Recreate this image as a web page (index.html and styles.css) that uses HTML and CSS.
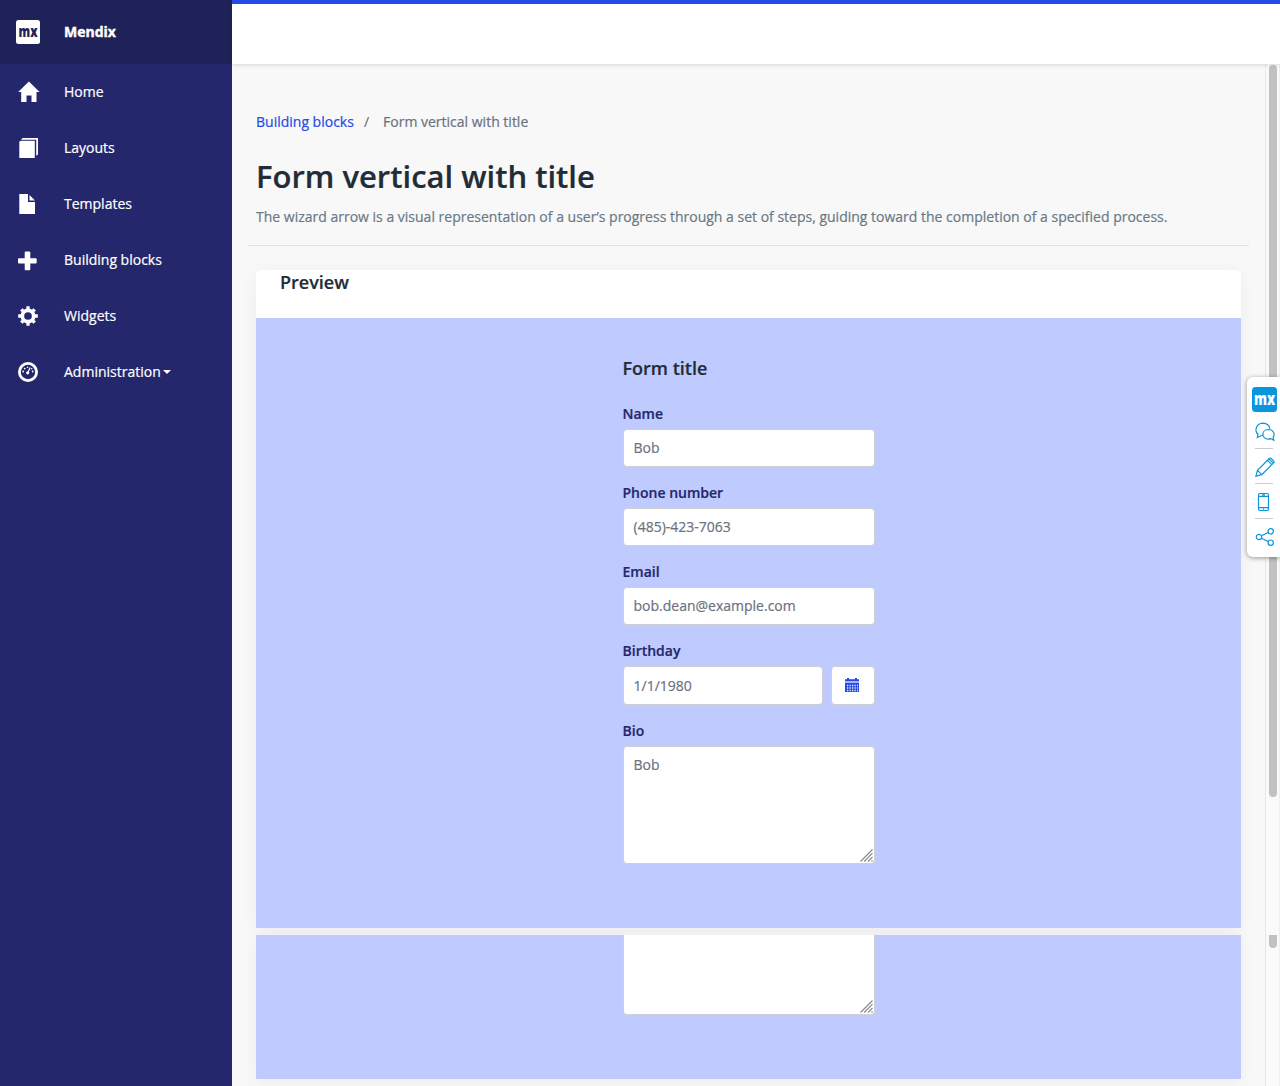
FILE: index.html
```html
<!DOCTYPE html>
<html lang="en">
<head>
<meta charset="utf-8">
<title>Form vertical with title</title>
<link rel="stylesheet" href="styles.css">
</head>
<body>
<div class="app">
  <nav class="sidebar">
    <div class="brand">
      <svg class="nav-icon" viewBox="0 0 24 24"><rect width="24" height="24" rx="2.5" fill="#fff"/><text class="brand-mark" x="12" y="16.6" textLength="19" lengthAdjust="spacingAndGlyphs">mx</text></svg>
      <span>Mendix</span>
    </div>
    <a class="nav-item"><svg class="nav-icon" viewBox="0 0 24 24"><path d="M12.9 1.400 23.600 12H20.500v10h-5v-6.500h-5V22H5.200V12H2.200z"/></svg><span>Home</span></a>
    <a class="nav-item"><svg class="nav-icon" viewBox="0 0 24 24"><path d="M3.300 5.500 5 4.800H18.800V22H3.300z"/><path d="M5 3.800 6.500 2H22v16.500l-1.800 1.300V3.800z"/></svg><span>Layouts</span></a>
    <a class="nav-item"><svg class="nav-icon" viewBox="0 0 24 24"><path d="M3.300 2h8.700v8h7v12H3.300zM13.500 3v5.500H19z"/></svg><span>Templates</span></a>
    <a class="nav-item"><svg class="nav-icon" viewBox="0 0 24 24"><path d="M9.700 3.500h3.600q1 0 1 1v5.800h5.400q1 0 1 1v3.200q0 1-1 1h-5.400v5.700q0 1-1 1H9.700q-1 0-1-1v-5.700H3q-1 0-1-1v-3.200q0-1 1-1h5.700V4.500q0-1 1-1z"/></svg><span>Building blocks</span></a>
    <a class="nav-item"><svg class="nav-icon" viewBox="0 0 24 24"><circle class="gear-ring" cx="12" cy="12" r="5.700"/><path class="gear-teeth" d="M12 2.200v3M12 18.800v3M2.200 12h3M18.800 12h3M5.300 5.300 7 7M17 17l1.700 1.700M5.300 18.700 7 17M17 7l1.700-1.700"/></svg><span>Widgets</span></a>
    <a class="nav-item"><svg class="nav-icon" viewBox="0 0 24 24"><circle class="dial" cx="12" cy="12" r="8.600"/><path class="dial-hand" d="M11.700 12.800 14.200 7.500"/><circle cx="11.700" cy="12.800" r="1.600"/><circle cx="7.200" cy="11.500" r=".9"/><circle cx="8.700" cy="8.600" r=".9"/><circle cx="11.500" cy="7.300" r=".8"/><circle cx="16.700" cy="11.500" r=".9"/><circle cx="15.700" cy="8.700" r=".8"/></svg><span>Administration</span><i class="caret"></i></a>
  </nav>
  <div class="main">
    <header class="topbar"></header>
    <div class="body">
      <div class="content">
        <div class="page-head">
          <div class="breadcrumb"><a>Building blocks</a><span class="slash">/</span><span>Form vertical with title</span></div>
          <h1>Form vertical with title</h1>
          <p>The wizard arrow is a visual representation of a user’s progress through a set of steps, guiding toward the completion of a specified process.</p>
        </div>
        <section class="card">
          <h2 class="card-title">Preview</h2>
          <div class="preview">
            <form class="form">
              <h3>Form title</h3>
              <div class="group"><label>Name</label><div class="input">Bob</div></div>
              <div class="group"><label>Phone number</label><div class="input">(485)-423-7063</div></div>
              <div class="group"><label>Email</label><div class="input">bob.dean@example.com</div></div>
              <div class="group"><label>Birthday</label>
                <div class="date-row"><div class="input date">1/1/1980</div><div class="date-button"><svg width="14" height="14" viewBox="0 0 14 14"><path d="M0 1.200h2V0h2v1.200h6V0h2v1.200h2V3H0z"/><path class="band" d="M0 3h14v2H0z"/><path d="M0 5h14v9H0z"/><path class="grid" d="M2 7.500h11M2 10h11M2 12.500h11"/></svg></div></div>
              </div>
              <div class="group"><label>Bio</label><div class="input area">Bob<svg class="grip" viewBox="0 0 13 13"><path d="M.5 12.500l12-12M4.200 12.500l8.300-8.300M8 12.500l4.500-4.500M11.500 12.500l1-1"/></svg></div></div>
            </form>
          </div>
        </section>
        <section class="card continued">
          <div class="preview-end">
            <div class="area-end"><svg class="grip" viewBox="0 0 13 13"><path d="M.5 12.500l12-12M4.200 12.500l8.300-8.300M8 12.500l4.500-4.500M11.500 12.500l1-1"/></svg></div>
          </div>
        </section>
      </div>
      <div class="rail"><div class="thumb"></div><div class="thumb-end"></div></div>
    </div>
  </div>
  <aside class="toolbox">
    <svg class="logo" viewBox="0 0 25 25"><rect width="25" height="25" rx="3.500"/><text transform="translate(2 17.800) scale(.72 1)">mx</text></svg>
    <div class="tool"><svg viewBox="0 0 20 20"><path d="M8 13.200 6 13.800 2.300 15.500 3 12.300C-.5 9.500.5 1.500 7.800 1.200c4.500 0 7 2.800 7 5.600"/><path d="M13.300 7.500c-7.300.2-7.200 9.500 0 9.600.9 0 1.700-.2 2.500-.5l3 1.700-.7-3.200c2.400-3 .2-7.600-4.800-7.600z"/></svg></div>
    <div class="tool"><svg viewBox="0 0 20 20"><path d="M.9 19.200 2.500 13.300 14.300 1.500q1-1 2 0l2.300 2.300q1 1 0 2L6.800 17.600zM2.500 13.300l4.300 4.300M12.500 3.300l4.300 4.300M14 1.900l4.300 4.300"/></svg></div>
    <div class="tool"><svg viewBox="0 0 20 20"><rect x="3.500" y="1.500" width="10" height="17" rx="1.500"/><path d="M3.500 4.300h10M3.500 15.700h10M7 2.900h3M8 17.200h1"/></svg></div>
    <div class="tool"><svg viewBox="0 0 20 20"><circle cx="4" cy="10" r="2.700"/><circle cx="15.700" cy="4.300" r="2.700"/><circle cx="15.700" cy="15.700" r="2.700"/><path d="m6.500 8.800 6.700-3.300M6.500 11.200l6.700 3.300"/></svg></div>
  </aside>
</div>
</body>
</html>
```
FILE: styles.css
```css
* { box-sizing: border-box; }
body { margin: 0; font: 14px/20px "Open Sans", sans-serif; color: #6c7180; background: #f8f8f8; -webkit-text-stroke: .2px; }
h1, h2, h3, p { margin: 0; }
.app { position: relative; display: flex; height: 1086px; overflow: hidden; }

.sidebar { width: 232px; flex: none; background: #24276c; color: #fff; }
.brand, .nav-item { display: flex; align-items: center; height: 56px; padding-left: 16px; }
.brand { height: 64px; background: #1f2159; font-weight: 700; -webkit-text-stroke: .4px; }
.nav-icon { width: 24px; height: 24px; margin-right: 24px; fill: #fff; overflow: visible; }
.brand-mark { font: 800 16px "Open Sans", sans-serif; fill: #1f2159; text-anchor: middle; -webkit-text-stroke: 0; }
.gear-ring { fill: none; stroke: #fff; stroke-width: 3.7; }
.gear-teeth { stroke: #fff; stroke-width: 3.3; }
.dial { fill: none; stroke: #fff; stroke-width: 2.8; }
.dial-hand { stroke: #fff; stroke-width: 1.2; }
.caret { margin-left: 2px; border: 4px solid transparent; border-top-color: #fff; border-bottom: 0; }

.main { flex: 1; min-width: 0; display: flex; flex-direction: column; }
.topbar { position: relative; z-index: 1; height: 64px; flex: none; border-top: 4px solid #264ae5; background: #fff; box-shadow: 0 1px 4px rgba(0, 0, 0, .14); }
.body { flex: 1; display: flex; }
.content { flex: 1; padding: 0 16px; }
.page-head { height: 182px; padding: 48px 8px 0; border-bottom: 1px solid #dfe1e2; }
.breadcrumb { display: flex; }
.breadcrumb a { color: #264ae5; }
.slash { margin: 0 14px 0 10px; }
h1 { margin-top: 21px; font-size: 31px; line-height: 46px; font-weight: 600; color: #212c37; }
.page-head p { margin-top: 8px; color: #6a7885; white-space: nowrap; }

.card { height: 658px; margin: 24px 8px 0; border-radius: 5px 5px 0 0; background: #fff; box-shadow: 0 2px 20px 1px rgba(5, 15, 129, .03), 0 2px 16px rgba(0, 0, 0, .018); }
.card-title { height: 48px; padding-left: 24px; font-size: 18px; line-height: 25px; font-weight: 600; color: #212c37; }
.preview { height: 610px; padding: 38px 366px 0; background: #bfcaff; }
.form { width: 252px; margin-left: 1px; }
h3 { margin: 0 0 23px -.5px; font-size: 18px; line-height: 25px; font-weight: 600; color: #212c37; }
.group { margin-bottom: 16px; }
label { display: block; margin: 0 0 5px -.5px; font-weight: 600; color: #24276c; }
.input { position: relative; height: 38px; padding: 8px 9.5px; border: 1px solid #ced0d3; border-radius: 4px; background: #fff; }
.date-row { display: flex; gap: 8px; }
.date { width: 200px; height: 39px; padding-top: 9px; }
.date-button { display: grid; place-items: center; flex: 1; height: 39px; padding: 0 2px 2px 0; border: 1px solid #ced0d3; border-radius: 4px; background: #fff; fill: #264ae5; }
.band { fill: #a5b3f4; }
.grid { stroke: #e4e9fc; stroke-width: 1.3; stroke-dasharray: 1.3 1.2; fill: none; }
.area { height: 118px; }
.grip { position: absolute; right: 1px; bottom: 1px; width: 13px; height: 13px; fill: none; stroke: #888; stroke-width: 1.1; }

.continued { height: 144px; margin-top: 7px; border-radius: 0; }
.preview-end { height: 144px; padding-left: 367px; background: #bfcaff; }
.area-end { position: relative; width: 252px; height: 80px; border: 1px solid #ced0d3; border-top: 0; border-radius: 0 0 4px 4px; background: #fff; }

.rail { display: flex; flex-direction: column; align-items: center; width: 15px; padding-top: 1px; border-left: 1px solid #e7e7e7; border-right: 1px solid #efefef; background: #fafafa; }
.thumb { width: 8px; height: 732px; border-radius: 4px; background: #c1c1c1; }
.thumb-end { width: 8px; height: 13px; margin-top: 138px; border-radius: 0 0 4px 4px; background: #c1c1c1; }

.toolbox { position: absolute; z-index: 2; top: 377px; right: 0; width: 33px; height: 180px; padding: 10px 0 0 5px; border-radius: 6px 0 0 6px; background: #fff; box-shadow: 0 1px 5px rgba(0, 0, 0, .4); }
.logo { display: block; width: 25px; height: 25px; margin-bottom: 2px; fill: #0a96dc; overflow: visible; }
.logo text { font: 800 18px "Open Sans", sans-serif; fill: #fff; -webkit-text-stroke: 0; }
.tool { width: 18px; height: 35px; margin-left: 3px; padding-top: 8px; border-bottom: 1px solid #ccc; }
.tool:last-child { border: 0; }
.tool svg { display: block; width: 20px; height: 20px; fill: none; stroke: #0a96dc; stroke-width: 1.2; }
```
